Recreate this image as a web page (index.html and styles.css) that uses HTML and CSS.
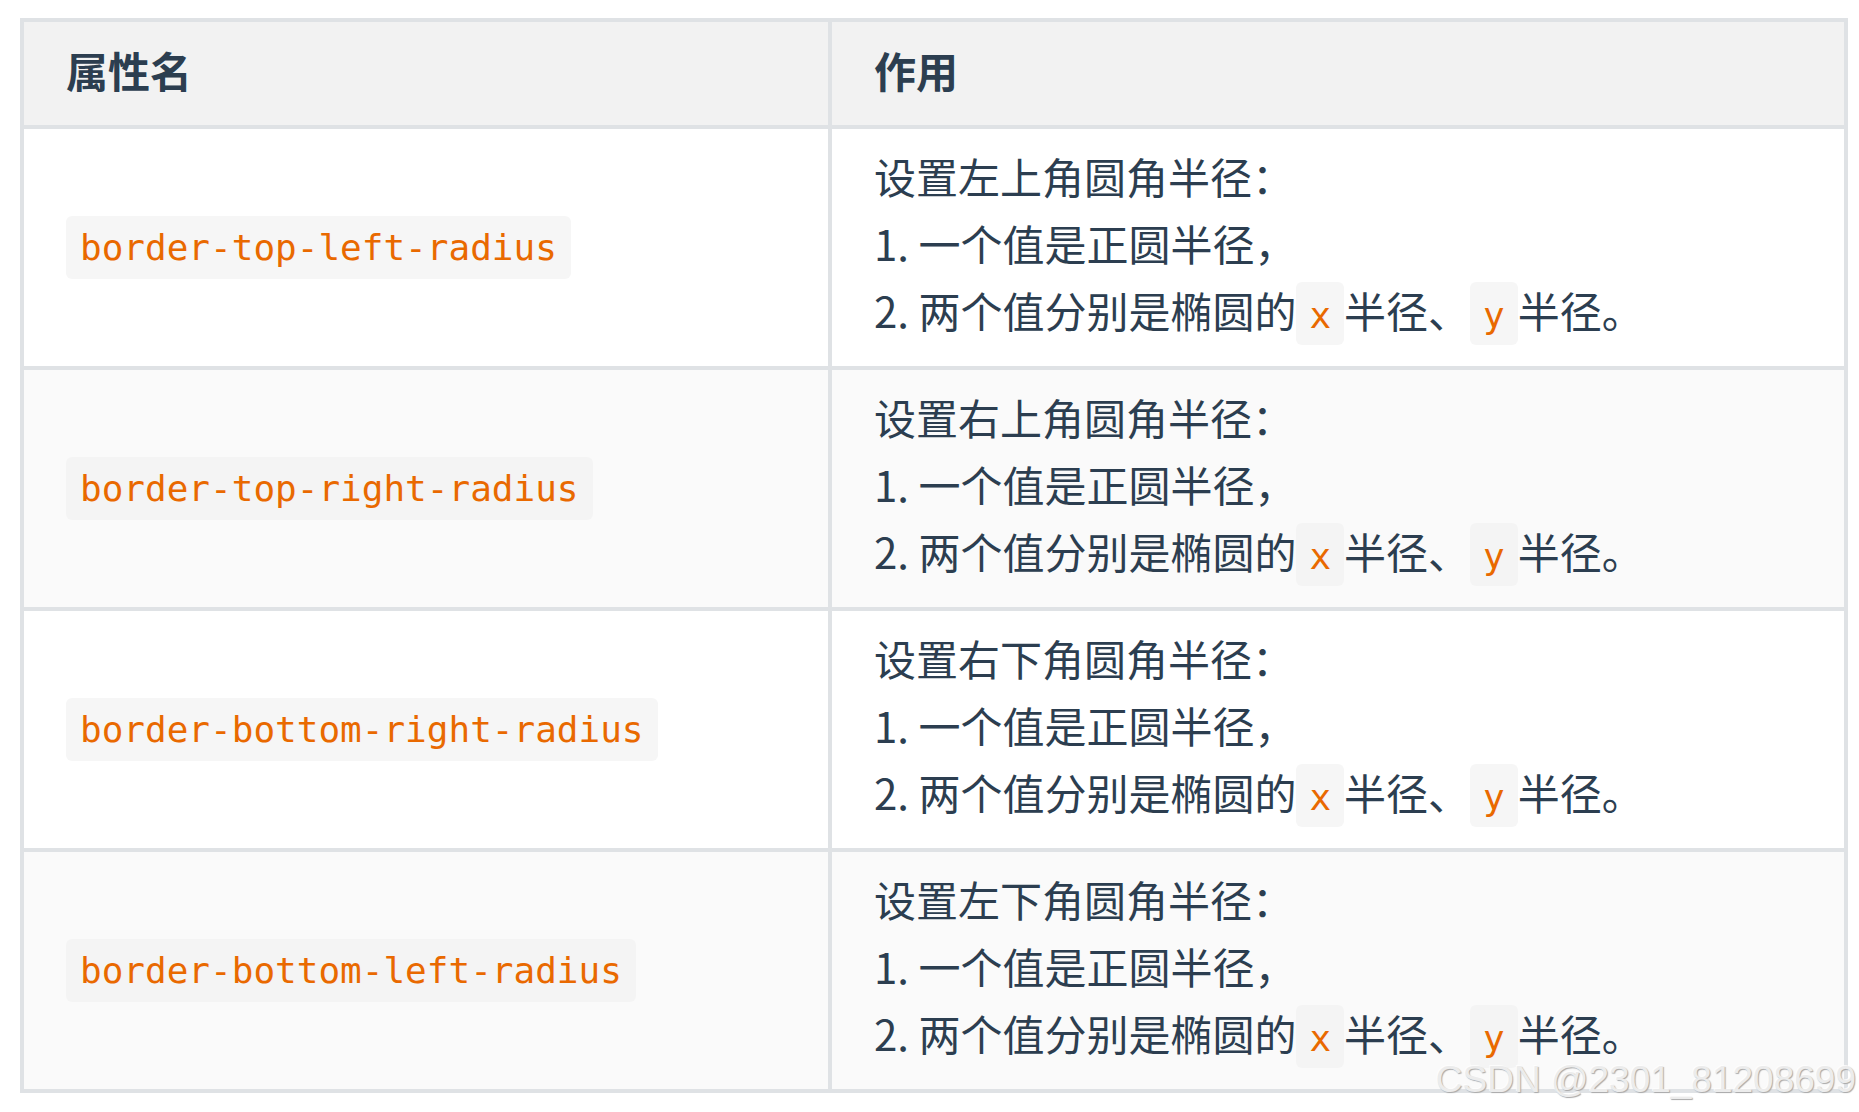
FILE: index.html
```html
<!DOCTYPE html>
<html lang="zh-CN">
<head>
<meta charset="utf-8">
<title>border radius</title>
<link rel="stylesheet" href="styles.css">
</head>
<body>
<div class="page">
  <table class="props">
    <thead>
      <tr class="head">
        <th class="c1">属性名</th>
        <th class="c2">作用</th>
      </tr>
    </thead>
    <tbody>
      <tr class="row">
        <td class="c1"><code>border-top-left-radius</code></td>
        <td class="c2"><div class="desc">设置左上角圆角半径：<br>1. 一个值是正圆半径，<br>2. 两个值分别是椭圆的<code>x</code>半径、<code>y</code>半径。</div></td>
      </tr>
      <tr class="row alt">
        <td class="c1"><code>border-top-right-radius</code></td>
        <td class="c2"><div class="desc">设置右上角圆角半径：<br>1. 一个值是正圆半径，<br>2. 两个值分别是椭圆的<code>x</code>半径、<code>y</code>半径。</div></td>
      </tr>
      <tr class="row">
        <td class="c1"><code>border-bottom-right-radius</code></td>
        <td class="c2"><div class="desc">设置右下角圆角半径：<br>1. 一个值是正圆半径，<br>2. 两个值分别是椭圆的<code>x</code>半径、<code>y</code>半径。</div></td>
      </tr>
      <tr class="row alt">
        <td class="c1"><code>border-bottom-left-radius</code></td>
        <td class="c2"><div class="desc">设置左下角圆角半径：<br>1. 一个值是正圆半径，<br>2. 两个值分别是椭圆的<code>x</code>半径、<code>y</code>半径。</div></td>
      </tr>
    </tbody>
  </table>
  <div class="watermark">CSDN @2301_81208699</div>
</div>
</body>
</html>
```

FILE: styles.css
```css
html, body {
  margin: 0;
  padding: 0;
  background: #ffffff;
}

.page {
  position: relative;
  width: 1859px;
  height: 1112px;
  padding: 18px 0 0 20px;
  box-sizing: border-box;
  font-family: "Noto Sans CJK SC", "Noto Sans", sans-serif;
  color: #2c3e50;
  font-size: 42px;
}

.props {
  border-collapse: separate;
  border-spacing: 4px;
  background: #dfe2e5;
  width: 1828px;
  table-layout: fixed;
}

.props .c1 {
  width: 804px;
}

.props th,
.props td {
  padding: 0 42px;
  text-align: left;
  vertical-align: middle;
  box-sizing: border-box;
}

.props th {
  background: #f2f2f2;
  font-weight: 700;
  line-height: 60px;
  padding-bottom: 8px;
}

.head {
  height: 103px;
}

.row {
  height: 237px;
}

.row td {
  background: #ffffff;
}

.row td.c1 {
  padding-bottom: 12px;
}

.row.alt td {
  background: #fafafa;
}

.desc {
  line-height: 67px;
  margin-top: -4px;
}

.num {
  letter-spacing: -2px;
}

code {
  font-family: "DejaVu Sans Mono", "Liberation Mono", monospace;
  font-size: 36px;
  color: #e96900;
  background: #f6f6f6;
  padding: 11px 14px;
  border-radius: 6px;
}

.desc code {
  padding: 13px 13px 9px;
}

.row.alt code {
  background: #f4f4f4;
}

.watermark {
  position: absolute;
  right: 3px;
  top: 1062px;
  font-family: "Liberation Sans", Arial, sans-serif;
  font-size: 37px;
  line-height: 36px;
  color: #ececec;
  text-shadow: 1px 1px 1px #a8a8a8, -1px -1px 0 rgba(255, 255, 255, 0.8);
  white-space: nowrap;
}
```
